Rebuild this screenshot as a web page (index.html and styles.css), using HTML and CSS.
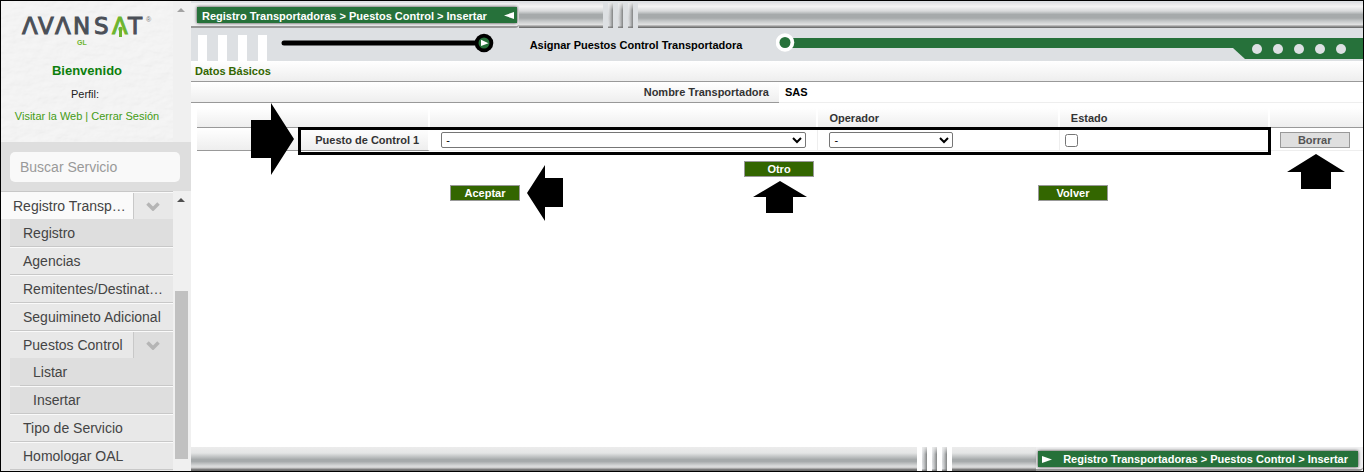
FILE: index.html
```html
<!DOCTYPE html>
<html lang="es">
<head>
<meta charset="utf-8">
<title>Asignar Puestos Control Transportadora</title>
<link rel="stylesheet" href="styles.css">
</head>
<body>
<div class="app">
  <aside class="sidebar">
    <div class="profile-row">
      <header class="profile">
        <svg class="texture" aria-hidden="true"><filter id="paper" x="0" y="0" width="100%" height="100%"><feTurbulence type="fractalNoise" baseFrequency="0.07 0.13" numOctaves="4" seed="8" result="n"/><feDiffuseLighting in="n" surfaceScale="1" lighting-color="#fff"><feDistantLight azimuth="45" elevation="68"/></feDiffuseLighting></filter><rect width="100%" height="100%" filter="url(#paper)"/></svg>
        <svg class="logo" viewBox="0 0 136 34" role="img" aria-label="Avansat GL">
          <text class="logo-word" y="18" x="1 17 34 52 73">ΛVΛNS</text>
          <text class="logo-word logo-green" x="91" y="18">Λ</text>
          <path d="M99.500 13v8" stroke="#6db52e" stroke-width="3"/><circle cx="99.500" cy="13" r="2.200" fill="#6db52e"/>
          <text class="logo-word" x="107" y="18">T</text>
          <text class="logo-reg" x="125" y="6">®</text>
          <text class="logo-sub" x="56" y="29">GL</text>
        </svg>
        <h2 class="welcome">Bienvenido</h2>
        <p class="perfil">Perfil:</p>
        <p class="links"><a href="#">Visitar la Web</a> | <a href="#">Cerrar Sesión</a></p>
      </header>
      <div class="track"><i class="tri muted"></i></div>
    </div>
    <div class="search"><input type="text" placeholder="Buscar Servicio" aria-label="Buscar Servicio"></div>
    <div class="menu-row">
      <nav class="menu">
        <div class="item top"><a href="#">Registro Transp…</a><button class="toggle" aria-label="Contraer Registro Transportadoras"><svg viewBox="0 0 14 9"><path d="M1.500 1.500L7 7L12.500 1.500"/></svg></button></div>
        <div class="sub">
          <div class="item active"><a href="#">Registro</a></div>
          <div class="item"><a href="#">Agencias</a></div>
          <div class="item"><a href="#">Remitentes/Destinat…</a></div>
          <div class="item"><a href="#">Seguimineto Adicional</a></div>
          <div class="item open"><a href="#">Puestos Control</a><button class="toggle" aria-label="Contraer Puestos Control"><svg viewBox="0 0 14 9"><path d="M1.500 1.500L7 7L12.500 1.500"/></svg></button></div>
          <div class="sub deep">
            <div class="item"><a href="#">Listar</a></div>
            <div class="item"><a href="#">Insertar</a></div>
          </div>
          <div class="item"><a href="#">Tipo de Servicio</a></div>
          <div class="item"><a href="#">Homologar OAL</a></div>
        </div>
      </nav>
      <div class="track"><i class="tri"></i><i class="thumb"></i></div>
    </div>
  </aside>

  <main class="main">
    <div class="bar">
      <div class="plate"><div class="crumbs"><span>Registro Transportadoras &gt; Puestos Control &gt; Insertar</span><svg viewBox="0 0 10 7"><path d="M0 3.500L10 0V7z"/></svg></div></div>
      <div class="metal lead"></div>
      <div class="slits"><i></i><i></i><i></i></div>
      <div class="metal grow"></div>
    </div>

    <div class="titlebar">
      <svg class="deco-left" viewBox="0 0 304 33" aria-hidden="true">
        <path d="M7 7h9v26H7zM27 7h9v26h-9zM47 7h9v26h-9zM67 7h9v26h-9z" fill="#fff"/>
        <path d="M93 15h195" stroke="#000" stroke-width="5" stroke-linecap="round"/>
        <circle cx="293" cy="15" r="9.300"/><circle cx="293" cy="15" r="5.500" fill="#26713a"/><path d="M290 11.800L297.500 15.200L290 18z" fill="#fff"/>
      </svg>
      <h1>Asignar Puestos Control Transportadora</h1>
      <svg class="deco-dot" viewBox="0 0 20 33" aria-hidden="true"><path d="M14 10h6v10h-6z" fill="#26713a"/><circle cx="9" cy="14.500" r="9.300" fill="#fff"/><circle cx="9" cy="14.500" r="5.500" fill="#26713a"/></svg>
      <div class="green-line"></div>
      <svg class="deco-right" viewBox="0 0 130 33" aria-hidden="true"><path d="M0 10H130V31H12L0 20z" fill="#26713a"/><g fill="#dde0e3"><circle cx="24" cy="21" r="5"/><circle cx="45" cy="21" r="5"/><circle cx="66" cy="21" r="5"/><circle cx="87" cy="21" r="5"/><circle cx="108" cy="21" r="5"/></g></svg>
    </div>

    <h3 class="section">Datos Básicos</h3>
    <div class="company"><div class="name">Nombre Transportadora</div><div class="value">SAS</div></div>

    <form class="form">
      <div class="posts">
        <table>
          <colgroup><col class="c1"><col class="c2"><col class="c3"><col class="c4"><col class="c5"></colgroup>
          <tr class="head"><th></th><th></th><th>Operador</th><th>Estado</th><th></th></tr>
          <tr class="entry">
            <th class="rowname">Puesto de Control 1</th>
            <td><select class="wide" aria-label="Puesto de Control 1"><option>-</option></select></td>
            <td><select class="medium" aria-label="Operador"><option>-</option></select></td>
            <td class="state"><input type="checkbox" aria-label="Estado"></td>
            <td class="remove"><span class="anchor"><button type="button" class="btn gray">Borrar</button><svg class="arrow up-big" viewBox="0 0 58 35"><path d="M29 0L58 18H44V35H14V18H0z"/></svg></span></td>
          </tr>
        </table>
        <div class="frame"></div>
        <svg class="arrow right" viewBox="0 0 43 72"><path d="M0 17H20V0L43 36L20 72V55H0z"/></svg>
      </div>
      <div class="actions one"><span class="anchor"><button type="button" class="btn">Otro</button><svg class="arrow up" viewBox="0 0 54 32"><path d="M27 0L54 16H40V32H13V16H0z"/></svg></span></div>
      <div class="actions two">
        <span class="anchor"><button type="submit" class="btn">Aceptar</button><svg class="arrow left" viewBox="0 0 36 56"><path d="M0 28L18 0V13H36V42H18V56z"/></svg></span>
        <span class="anchor"><button type="button" class="btn">Volver</button></span>
      </div>
    </form>

    <div class="bar bottom">
      <div class="metal grow"></div>
      <div class="slits"><i></i><i></i><i></i></div>
      <div class="metal lead"></div>
      <div class="plate"><div class="crumbs"><svg viewBox="0 0 10 7"><path d="M10 3.500L0 0V7z"/></svg><span>Registro Transportadoras &gt; Puestos Control &gt; Insertar</span></div></div>
    </div>
  </main>
</div>
</body>
</html>
```

FILE: styles.css
```css
* { box-sizing: border-box; }
body { margin: 0; font-family: "Liberation Sans", Arial, sans-serif; font-size: 11px; color: #000; background: #fff; }
h1, h2, h3, p { margin: 0; }
a { color: inherit; text-decoration: none; }
button { font-family: inherit; cursor: pointer; }

.app { display: flex; height: 100vh; border: 1px solid #000; overflow: hidden; }

/* Sidebar */
.sidebar { flex: none; width: 190px; display: flex; flex-direction: column; background: #f0f0f0; }
.profile-row, .menu-row { display: flex; }
.menu-row { flex: 1; min-height: 0; }
.profile { position: relative; flex: 1; height: 141px; padding-top: 15px; text-align: center; background: #f2f2f2; }
.texture { position: absolute; top: 0; left: 0; width: 100%; height: 100%; opacity: 0.3; }
.logo { position: relative; display: block; width: 136px; height: 34px; margin-left: 20px; overflow: visible; }
.logo-word { font: 23px "DejaVu Sans", sans-serif; fill: #4a4f57; stroke: #4a4f57; stroke-width: 1px; }
.logo-green { fill: #6db52e; stroke: #6db52e; }
.logo-reg { font: 7px "Liberation Sans", sans-serif; fill: #777; }
.logo-sub { font: bold 7px "Liberation Sans", sans-serif; fill: #6db52e; }
.welcome { position: relative; margin-top: 13px; font-size: 13px; line-height: 16px; color: #0c7f0c; }
.perfil { position: relative; margin-top: 9px; line-height: 12px; color: #222; padding-right: 4px; }
.links { position: relative; margin-top: 10px; line-height: 12px; color: #449c14; }
.track { position: relative; flex: none; width: 18px; background: #f0f0f0; }
.menu-row .track { padding-top: 100px; }
.tri { position: absolute; top: 7px; left: 4px; border: 4px solid transparent; border-top: 0; border-bottom-color: #505050; }
.tri.muted { border-bottom-color: #a3a3a3; }
.thumb { display: block; width: 13px; height: 168px; margin-left: 2px; background: #c1c1c1; }
.search { height: 49px; padding: 10px 11px 9px 9px; background: #dedede; }
.search input { display: block; width: 100%; height: 30px; border: 0; border-radius: 5px; padding: 0 10px; font: 14px "Liberation Sans", Arial, sans-serif; background: #f9f9f9; color: #444; }
.search input::placeholder { color: #999; }

.menu { flex: 1; min-width: 0; background: #e8e8e8; border-top: 1px solid #c8c8c8; overflow: hidden; font-size: 14px; color: #444; }
.item { display: flex; height: 28px; line-height: 26px; border-top: 1px solid #fafafa; border-bottom: 1px solid #c8c8c8; }
.item a { flex: 1; padding-left: 13px; white-space: nowrap; }
.item.top { height: 27px; background: #fafafa; border-bottom: 0; line-height: 27px; }
.item.top a { padding-left: 12px; }
.item.active { background: #dedede; border-top-color: #dedede; }
.item.open { height: 27px; border-bottom: 0; }
.toggle { flex: none; width: 40px; border: 0; border-left: 1px solid #c8c8c8; padding: 0 2px 0 0; background: #dedede; }
.item.top .toggle { background: #e8e8e8; }
.toggle svg { width: 14px; height: 9px; fill: none; stroke: #b5b5b5; stroke-width: 3.500px; }
.sub { padding-left: 9px; }
.sub.deep { padding-left: 10px; background: #dedede; }
.sub.deep .item:first-child { border-top-color: #dedede; }
.sub.deep .item:last-child { margin-left: -10px; padding-left: 10px; }

/* Metal bars */
.main { flex: 1; min-width: 0; display: flex; flex-direction: column; overflow: hidden; }
.bar { display: flex; height: 27px; padding-top: 2px; background: #dde0e3; }
.bar.bottom { height: 24px; padding: 0; margin-top: auto; background: #fff; }
.metal { background: linear-gradient(#e4e4e6 0%, #f3f3f3 14%, #d8dadb 32%, #a6aaab 46%, #a6aaab 60%, #c4c7c8 72%, #e0e1e1 86%, #9a9a9a 93%, #5f6161 100%); }
.bottom .metal { background: linear-gradient(#ececec 0%, #e4e5e5 25%, #a6aaab 52%, #a6aaab 60%, #dcdddd 80%, #d0d0d0 86%, #777 94%, #666 100%); }
.metal.grow { flex: 1; }
.metal.lead { width: 84px; }
.slits { display: flex; gap: 5px; padding: 0 5px; }
.slits i { width: 5px; background: linear-gradient(#eeec, #eee0 30%, #9992 60%, #eee0 90%, #777), linear-gradient(90deg, #e6e8ea, #c8cacc 40%, #808282); }
.plate { padding: 4px 2px 3px 6px; background: #f0f0f1; border-bottom: 2px solid #999; border-radius: 0 0 4px 0; }
.crumbs { display: flex; align-items: center; gap: 17px; height: 16px; padding: 0 3px 0 5px; font-weight: bold; color: #fff; background: #26713a; white-space: nowrap; box-shadow: 0 0 3px #333; }
.crumbs span { padding-top: 2px; }
.crumbs svg { width: 10px; height: 7px; fill: #fff; }
.bottom .plate { padding: 4px 5px 2px 2px; }
.bottom .crumbs { gap: 11px; padding: 0 10px 0 4px; }
.bottom .crumbs span { padding-top: 0; }

/* Title bar */
.titlebar { display: flex; height: 33px; background: #dde0e3; }
.titlebar svg { flex: none; height: 33px; }
.deco-left { width: 304px; }
.titlebar h1 { width: 281px; padding-left: 1px; font-size: 11px; line-height: 35px; text-align: center; white-space: nowrap; }
.deco-dot { width: 20px; }
.green-line { flex: 1; height: 10px; margin-top: 10px; background: #26713a; }
.deco-right { width: 130px; }

/* Form */
.section, .company .name, .head th, .rowname { background: linear-gradient(#fff, #eee); border-bottom: 1px solid #999; }
.section { height: 21px; padding-left: 4px; font-size: 11px; line-height: 20px; color: #360; }
.company { display: grid; grid-template-columns: 1fr 1fr; height: 21px; margin-right: -4px; font-weight: bold; line-height: 20px; }
.company .name { padding-right: 10px; text-align: right; color: #333; }
.company .value { padding-left: 6px; border-bottom: 1px solid #eee; }
.posts { position: relative; margin: 5px 0 0 6px; }
table { width: 100%; table-layout: fixed; border-collapse: separate; border-spacing: 0; }
.c1 { width: 20%; }
.c2 { width: 33.300%; }
.c3 { width: 20.700%; }
.c4 { width: 18%; }
.c5 { width: 8%; }
th, td { height: 23px; padding: 0 0 0 11px; text-align: left; border-right: 2px solid #fff; color: #333; }
td { border-bottom: 1px solid #eee; border-right: 1px solid #eee; }
th:last-child, td:last-child { border-right: 0; }
.head th { height: 20px; }
.entry th, .entry td { padding-top: 2px; }
.rowname { padding-right: 9px; text-align: right; }
select { display: block; height: 16px; border: 1px solid #767676; border-radius: 2px; padding: 0; font: 11px "Liberation Sans", Arial, sans-serif; background: #fff; }
.wide { width: 365px; max-width: 97%; }
.medium { width: 124px; }
td.state { padding-left: 5px; }
td.remove { padding-left: 10px; }
.state input { display: block; width: 13px; height: 13px; margin: 0; }
.anchor { position: relative; display: block; width: 70px; }
.btn { display: block; width: 70px; height: 16px; padding: 0; border: 1px solid #999; font-size: 11px; font-weight: bold; line-height: 14px; color: #fff; background: #360; }
.btn.gray { color: #555; background: #dfdfdf; }
.actions { display: grid; justify-items: center; margin: 8px -4px 0 0; }
.actions.one { margin-top: 10px; }
.actions.two { grid-template-columns: 1fr 1fr; }

/* Callouts laid over the form */
.frame { position: absolute; top: 19px; left: 8.700%; right: 7.900%; height: 28px; border: 3px solid #000; pointer-events: none; }
.arrow { position: absolute; fill: #000; pointer-events: none; }
.arrow.right { top: -5px; left: 54px; width: 43px; height: 72px; }
.arrow.up { top: 20px; left: 9px; width: 54px; height: 32px; }
.arrow.up-big { top: 22px; left: 7px; width: 58px; height: 35px; }
.arrow.left { top: -20px; left: 77px; width: 36px; height: 56px; }
```
